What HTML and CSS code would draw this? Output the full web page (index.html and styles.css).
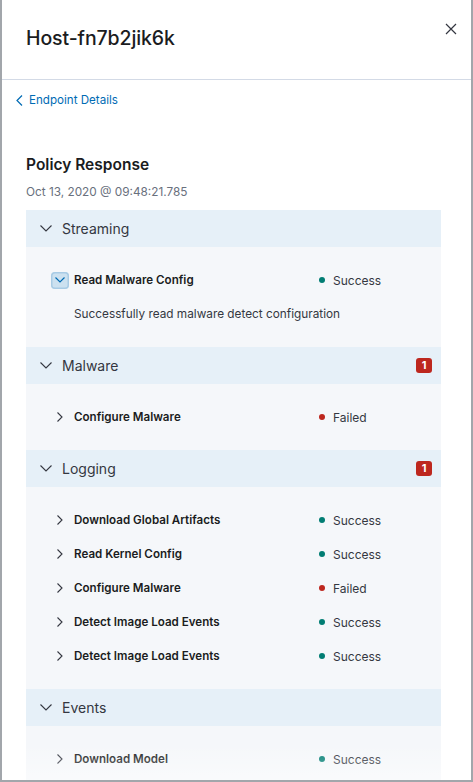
FILE: index.html
```html
<!DOCTYPE html>
<html>
<head>
<meta charset="utf-8">
<link rel="stylesheet" href="styles.css">
</head>
<body>
<div class="flyout">
  <div class="header">
    <h1 class="title">Host-fn7b2jik6k</h1>
    <button class="close" aria-label="Close">
      <svg width="12" height="12" viewBox="0 0 12 12"><path d="M1 1 L11 11 M11 1 L1 11" stroke="#343741" stroke-width="1.2" fill="none"/></svg>
    </button>
  </div>
  <div class="body">
    <a class="back" href="#">
      <svg width="7" height="11" viewBox="0 0 7 11"><path d="M6 0.5 L1 5.5 L6 10.5" stroke="#006bb4" stroke-width="1.2" fill="none"/></svg>
      <span>Endpoint Details</span>
    </a>
    <h2 class="section-title">Policy Response</h2>
    <div class="date">Oct 13, 2020 @ 09:48:21.785</div>

    <div class="accordion">
      <div class="acc-head">
        <svg class="acc-chev" width="12" height="7" viewBox="0 0 12 7"><path d="M0.5 0.5 L6 6 L11.5 0.5" stroke="#343741" stroke-width="1.1" fill="none"/></svg>
        <span class="acc-title">Streaming</span>
      </div>
      <div class="acc-body">
        <div class="row">
          <span class="row-btn focused"><svg width="10" height="6" viewBox="0 0 10 6"><path d="M0.5 0.5 L5 5 L9.5 0.5" stroke="#006bb4" stroke-width="1.2" fill="none"/></svg></span>
          <span class="row-name">Read Malware Config</span>
          <span class="status"><i class="dot ok"></i>Success</span>
        </div>
        <div class="row-desc">Successfully read malware detect configuration</div>
      </div>

      <div class="acc-head">
        <svg class="acc-chev" width="12" height="7" viewBox="0 0 12 7"><path d="M0.5 0.5 L6 6 L11.5 0.5" stroke="#343741" stroke-width="1.1" fill="none"/></svg>
        <span class="acc-title">Malware</span>
        <span class="badge">1</span>
      </div>
      <div class="acc-body">
        <div class="row">
          <span class="row-btn"><svg width="6" height="10" viewBox="0 0 6 10"><path d="M0.5 0.5 L5 5 L0.5 9.5" stroke="#343741" stroke-width="1.1" fill="none"/></svg></span>
          <span class="row-name">Configure Malware</span>
          <span class="status"><i class="dot fail"></i>Failed</span>
        </div>
      </div>

      <div class="acc-head">
        <svg class="acc-chev" width="12" height="7" viewBox="0 0 12 7"><path d="M0.5 0.5 L6 6 L11.5 0.5" stroke="#343741" stroke-width="1.1" fill="none"/></svg>
        <span class="acc-title">Logging</span>
        <span class="badge">1</span>
      </div>
      <div class="acc-body">
        <div class="row">
          <span class="row-btn"><svg width="6" height="10" viewBox="0 0 6 10"><path d="M0.5 0.5 L5 5 L0.5 9.5" stroke="#343741" stroke-width="1.1" fill="none"/></svg></span>
          <span class="row-name">Download Global Artifacts</span>
          <span class="status"><i class="dot ok"></i>Success</span>
        </div>
        <div class="row">
          <span class="row-btn"><svg width="6" height="10" viewBox="0 0 6 10"><path d="M0.5 0.5 L5 5 L0.5 9.5" stroke="#343741" stroke-width="1.1" fill="none"/></svg></span>
          <span class="row-name">Read Kernel Config</span>
          <span class="status"><i class="dot ok"></i>Success</span>
        </div>
        <div class="row">
          <span class="row-btn"><svg width="6" height="10" viewBox="0 0 6 10"><path d="M0.5 0.5 L5 5 L0.5 9.5" stroke="#343741" stroke-width="1.1" fill="none"/></svg></span>
          <span class="row-name">Configure Malware</span>
          <span class="status"><i class="dot fail"></i>Failed</span>
        </div>
        <div class="row">
          <span class="row-btn"><svg width="6" height="10" viewBox="0 0 6 10"><path d="M0.5 0.5 L5 5 L0.5 9.5" stroke="#343741" stroke-width="1.1" fill="none"/></svg></span>
          <span class="row-name">Detect Image Load Events</span>
          <span class="status"><i class="dot ok"></i>Success</span>
        </div>
        <div class="row">
          <span class="row-btn"><svg width="6" height="10" viewBox="0 0 6 10"><path d="M0.5 0.5 L5 5 L0.5 9.5" stroke="#343741" stroke-width="1.1" fill="none"/></svg></span>
          <span class="row-name">Detect Image Load Events</span>
          <span class="status"><i class="dot ok"></i>Success</span>
        </div>
      </div>

      <div class="acc-head">
        <svg class="acc-chev" width="12" height="7" viewBox="0 0 12 7"><path d="M0.5 0.5 L6 6 L11.5 0.5" stroke="#343741" stroke-width="1.1" fill="none"/></svg>
        <span class="acc-title">Events</span>
      </div>
      <div class="acc-body">
        <div class="row">
          <span class="row-btn"><svg width="6" height="10" viewBox="0 0 6 10"><path d="M0.5 0.5 L5 5 L0.5 9.5" stroke="#343741" stroke-width="1.1" fill="none"/></svg></span>
          <span class="row-name">Download Model</span>
          <span class="status"><i class="dot ok"></i>Success</span>
        </div>
      </div>
    </div>
  </div>
  <div class="fade"></div>
</div>
</body>
</html>
```

FILE: styles.css
```css
* { box-sizing: border-box; }
html, body { margin: 0; padding: 0; background: #fff; }
body {
  font-family: Inter, "Noto Sans", sans-serif;
  color: #343741;
  width: 473px;
  height: 782px;
  overflow: hidden;
}
.flyout {
  position: relative;
  width: 473px;
  height: 782px;
  border-left: 2px solid #a2a6ab;
  border-right: 2px solid #a2a6ab;
  border-bottom: 2px solid #a2a6ab;
  display: flex;
  flex-direction: column;
  overflow: hidden;
  background: #fff;
}
.header {
  height: 80px;
  flex: none;
  border-bottom: 1px solid #d3dae6;
  display: flex;
  align-items: flex-start;
  justify-content: space-between;
  padding: 0 13px 0 24px;
}
.title {
  margin: 26px 0 0;
  font-size: 19.5px;
  line-height: 24px;
  font-weight: 500;
  color: #1a1c21;
  letter-spacing: -0.1px;
}
.close {
  margin-top: 22px;
  width: 14px;
  height: 14px;
  padding: 0;
  border: 0;
  background: none;
  display: flex;
  align-items: center;
  justify-content: center;
}
.body {
  flex: 1;
  overflow: hidden;
  padding: 12px 30px 0 24px;
}
.back {
  display: flex;
  align-items: center;
  gap: 6px;
  margin-left: -10px;
  height: 16px;
  color: #006bb4;
  text-decoration: none;
  font-size: 11.6px;
  line-height: 16px;
}
.section-title {
  margin: 45px 0 0;
  font-size: 15.5px;
  line-height: 24px;
  font-weight: 600;
  color: #1a1c21;
}
.date {
  margin-top: 7px;
  font-size: 11.8px;
  line-height: 16px;
  color: #69707d;
}
.accordion {
  margin-top: 10px;
}
.acc-head {
  height: 37px;
  background: #e6f0f8;
  display: flex;
  align-items: center;
  padding: 0 9px 0 14px;
}
.acc-chev { flex: none; }
.acc-title {
  margin-left: 10px;
  font-size: 14px;
  color: #343741;
  flex: 1;
}
.badge {
  background: #bd271e;
  color: #fff;
  font-size: 11px;
  font-weight: 700;
  line-height: 15px;
  height: 15px;
  min-width: 16px;
  text-align: center;
  border-radius: 3px;
  padding: 0 4px;
}
.acc-body {
  background: #f5f7fa;
  padding: 16px 0;
}
.row {
  height: 34px;
  display: flex;
  align-items: center;
  padding-left: 25px;
}
.row-btn {
  flex: none;
  width: 18px;
  height: 17px;
  display: flex;
  align-items: center;
  justify-content: center;
  border-radius: 4px;
  margin-right: 5px;
}
.row-btn.focused {
  background: #cce1f0;
  box-shadow: inset 0 0 0 1.5px #a8cbe5;
}
.row-name {
  flex: 1;
  font-size: 11.6px;
  font-weight: 600;
  color: #1a1c21;
}
.status {
  width: 122px;
  display: flex;
  align-items: center;
  font-size: 12px;
  color: #343741;
}
.dot {
  width: 6px;
  height: 6px;
  border-radius: 50%;
  margin-right: 8px;
}
.dot.ok { background: #017d73; }
.dot.fail { background: #bd271e; }
.row-desc {
  height: 34px;
  display: flex;
  align-items: center;
  padding-left: 48px;
  font-size: 11.8px;
  color: #343741;
}
.fade {
  position: absolute;
  left: 0;
  right: 0;
  bottom: 0;
  height: 36px;
  background: linear-gradient(to bottom, rgba(255,255,255,0), rgba(255,255,255,0.45));
  pointer-events: none;
}
```
